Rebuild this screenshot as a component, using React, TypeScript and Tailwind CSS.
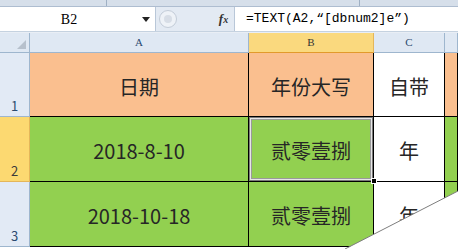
import React from "react";

const CJK = "font-['Noto_Sans_CJK_SC','Noto_Sans',sans-serif]";
const SONG = "font-['Liberation_Serif','Noto_Sans_CJK_SC',serif]";

type Cell = { text: string; fill: "orange" | "green" | "white"; active?: boolean };

const ROWS: { num: string; height: string; selected?: boolean; cells: Cell[] }[] = [
  {
    num: "1",
    height: "h-[64px]",
    cells: [
      { text: "日期", fill: "orange" },
      { text: "年份大写", fill: "orange" },
      { text: "自带", fill: "white" },
      { text: "", fill: "orange" },
    ],
  },
  {
    num: "2",
    height: "h-[65px]",
    selected: true,
    cells: [
      { text: "2018-8-10", fill: "green" },
      { text: "贰零壹捌", fill: "green", active: true },
      { text: "年", fill: "white" },
      { text: "", fill: "green" },
    ],
  },
  {
    num: "3",
    height: "h-[65px]",
    cells: [
      { text: "2018-10-18", fill: "green" },
      { text: "贰零壹捌", fill: "green" },
      { text: "年", fill: "white" },
      { text: "", fill: "green" },
    ],
  },
];

const fillClass = {
  orange: "bg-[#fabf8f]",
  green: "bg-[#92d050]",
  white: "bg-white",
};

function FormulaBar() {
  return (
    <div className="flex h-[25px] border-b border-[#c5d2e0] bg-[#e3eaf3]">
      <div className="flex w-[156px] items-center border-r border-[#b9c7d8] bg-white">
        <span className={`${SONG} flex-1 pr-[4px] text-center text-[14px] text-black`}>B2</span>
        <svg width="8" height="5" viewBox="0 0 8 5" className="mr-[5px]">
          <path d="M0 0h8L4 5z" fill="#222" />
        </svg>
      </div>
      <div className="flex flex-1 items-center">
        <div className="ml-[3px] flex h-[18px] w-[18px] items-center justify-center rounded-full border border-[#c3ccd8] bg-[#eef2f7]">
          <div className="h-[8px] w-[8px] rounded-full bg-[#d7dde6]" />
        </div>
      </div>
      <div className="flex w-[22px] items-center justify-center border-r border-[#b9c7d8]">
        <span className="font-['Liberation_Serif',serif] text-[13px] font-bold italic text-[#333]">
          f<span className="text-[10px]">x</span>
        </span>
      </div>
      <div className="flex w-[223px] items-center bg-white pl-[11px]">
        <span className="font-['Liberation_Mono',monospace] text-[13px] text-black">
          =TEXT(A2,“[dbnum2]e”)
        </span>
      </div>
    </div>
  );
}

export default function App() {
  return (
    <div className="relative h-[249px] w-[458px] overflow-hidden bg-white">
      <div className="flex h-[7px] border-b border-[#aebdd0] bg-[#d6dfea]">
        <div className="w-[107px] border-r border-[#9fb0c4]" />
        <div className="w-[253px] border-r border-[#9fb0c4]" />
      </div>
      <FormulaBar />

      <div className="grid grid-cols-[30px_219px_125px_71px_1fr] border-t border-[#e9eef5]">
        <div className="relative h-[20px] border-r border-b border-[#9eb6ce] bg-[#dfe8f3]">
          <svg width="9" height="9" viewBox="0 0 9 9" className="absolute right-[3px] bottom-[3px]">
            <path d="M9 0v9H0z" fill="#b6c0cc" />
          </svg>
        </div>
        {["A", "B", "C", ""].map((col) => (
          <div
            key={col || "D"}
            className={`flex h-[20px] items-center justify-center border-r border-b text-[11px] ${SONG} ${
              col === "B"
                ? "border-[#e4b65a] border-b-[#e29a2c] bg-[#fad97e] text-[#333]"
                : "border-[#9eb6ce] bg-[#dfe8f3] text-[#2b4a6f]"
            }`}
          >
            {col}
          </div>
        ))}

        {ROWS.map((row) => (
          <React.Fragment key={row.num}>
            <div
              className={`flex ${row.height} items-end pb-[1px] pl-[11px] border-r border-b text-[13px] ${CJK} ${
                row.selected
                  ? "border-[#e4b65a] bg-[#fcd971] text-[#3a3a3a]"
                  : "border-[#9eb6ce] bg-[#e2eaf5] text-[#2b4a6f]"
              }`}
            >
              {row.num}
            </div>
            {row.cells.map((cell, i) => (
              <div
                key={i}
                className={`flex ${row.height} items-center justify-center border-r border-b border-black pt-[4px] ${CJK} text-[20px] text-[#262626] ${fillClass[cell.fill]} ${
                  cell.active ? "shadow-[inset_0_0_0_1px_#7a7a7a,inset_0_0_0_2px_#e6e6e6,inset_0_0_0_3px_#9a9a9a]" : ""
                }`}
              >
                {cell.text}
              </div>
            ))}
          </React.Fragment>
        ))}
      </div>

      {/* fill handle of the active cell */}
      <div className="absolute left-[371px] top-[178px] h-[6px] w-[6px] border border-white bg-black" />

      {/* page curl in the corner */}
      <svg width="458" height="249" viewBox="0 0 458 249" className="pointer-events-none absolute left-0 top-0">
        <polygon points="345,249 458,191 458,249" fill="#ffffff" />
        <line x1="345" y1="249" x2="458" y2="191" stroke="#7d7d7d" strokeWidth="1" />
      </svg>
    </div>
  );
}
